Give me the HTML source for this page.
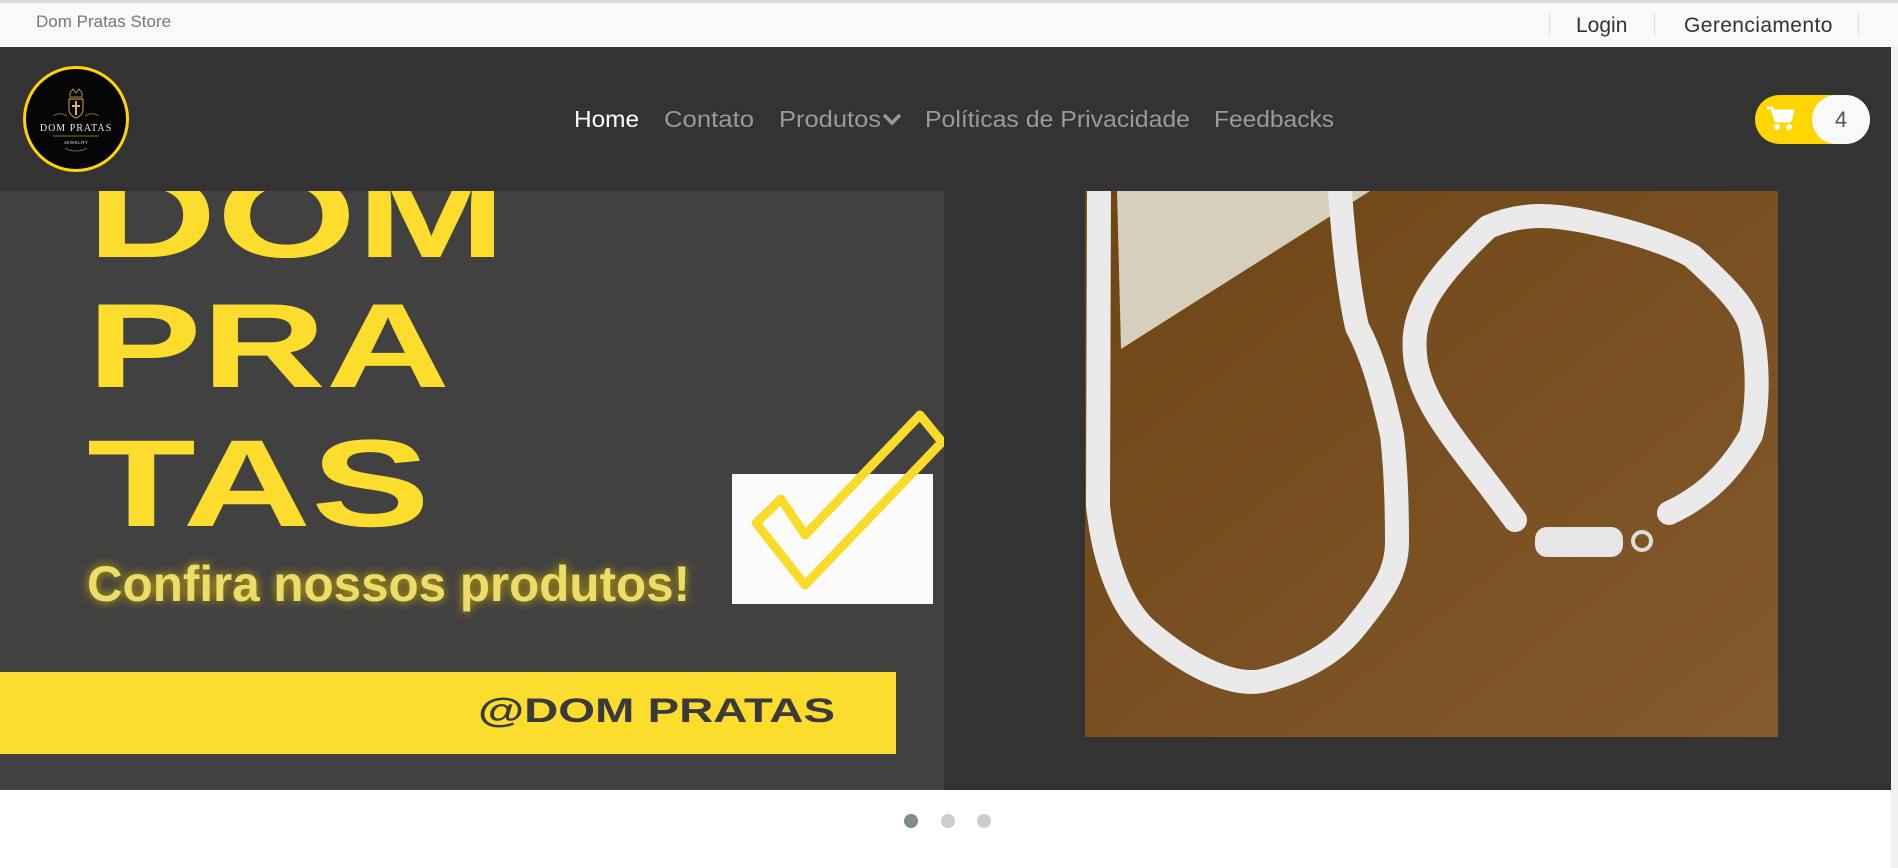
<!DOCTYPE html>
<html><head><meta charset="utf-8">
<style>
*{margin:0;padding:0;box-sizing:border-box}
body{width:1898px;height:868px;overflow:hidden;background:#fff;font-family:"Liberation Sans",sans-serif;position:relative}
.abs{position:absolute}
#top{left:0;top:0;width:1898px;height:47px;background:#f8f9fa;border-top:3px solid #dcdcdc}
#nav{left:0;top:47px;width:1891px;height:144px;background:#333}
.sep{position:absolute;top:12px;width:1px;height:25px;background:#ddd}
.tl{position:absolute;top:14px;font-size:21px;color:#333}
.dot{position:absolute;top:814px;width:14px;height:14px;border-radius:50%;background:#ccc}
</style></head><body>
<div id="top" class="abs"></div>
<div class="abs" style="left:36px;top:12px;font-size:17px;color:#777">Dom Pratas Store</div>
<div class="sep" style="left:1549px"></div>
<div class="tl" style="left:1576px">Login</div>
<div class="sep" style="left:1654px"></div>
<div class="tl" style="left:1684px;letter-spacing:0.4px">Gerenciamento</div>
<div class="sep" style="left:1858px"></div>

<div id="nav" class="abs"></div>
<div class="abs" style="left:23px;top:66px;width:106px;height:106px;border-radius:50%;border:3px solid #ffd400;background:#050505"></div>
<svg class="abs" style="left:23px;top:66px" width="106" height="106" viewBox="0 0 106 106">
<path d="M47 27l3-4 3 4 3-4 3 4v4h-12z" fill="none" stroke="#b08a45" stroke-width="1"/>
<path d="M46 33h14v10c0 5-4 8-7 9-3-1-7-4-7-9z" fill="none" stroke="#b08a45" stroke-width="1.2"/>
<path d="M53 35v14M49 40h8" stroke="#d9b36a" stroke-width="2"/>
<path d="M30 50c6-4 10-2 14 0M76 50c-6-4-10-2-14 0" fill="none" stroke="#8a6a35" stroke-width="1"/>
<text x="53" y="65" font-size="10" fill="#e8e8e8" text-anchor="middle" font-family="Liberation Serif,serif" letter-spacing="1">DOM PRATAS</text>
<path d="M30 70h46" stroke="#8a6a35" stroke-width="1"/>
<text x="53" y="78" font-size="4.5" fill="#ddd" text-anchor="middle" letter-spacing="0.5">JEWELRY</text>
<path d="M42 82c5 4 17 4 22 0" fill="none" stroke="#8a6a35" stroke-width="1"/>
</svg>

<svg class="abs" style="left:560px;top:95px" width="800" height="50" viewBox="0 0 800 50">
<g font-family="Liberation Sans,sans-serif" font-size="23" fill="#9a9a9a">
<text x="14" y="32" fill="#fff" textLength="65" lengthAdjust="spacingAndGlyphs">Home</text>
<text x="104" y="32" textLength="90" lengthAdjust="spacingAndGlyphs">Contato</text>
<text x="219" y="32" textLength="102" lengthAdjust="spacingAndGlyphs">Produtos</text>
<text x="365" y="32" textLength="265" lengthAdjust="spacingAndGlyphs">Políticas de Privacidade</text>
<text x="654" y="32" textLength="120" lengthAdjust="spacingAndGlyphs">Feedbacks</text>
</g>
<path d="M324 20l8 8 8-8" fill="none" stroke="#9a9a9a" stroke-width="3.5"/>
</svg>

<div class="abs" style="left:1755px;top:95px;width:115px;height:49px;border-radius:25px;background:#ffd600"></div>
<div class="abs" style="left:1812px;top:95px;width:58px;height:49px;border-radius:25px;background:#f8f9fa;text-align:center;line-height:49px;font-size:22px;color:#555">4</div>
<svg class="abs" style="left:1766px;top:105px" width="29" height="26" viewBox="0 0 29 26"><path d="M1 3h5l4 13h14l3-10H8" fill="#fff" stroke="#fff" stroke-width="3" stroke-linejoin="round"/><circle cx="11" cy="22" r="3" fill="#fff"/><circle cx="23" cy="22" r="3" fill="#fff"/></svg>

<svg class="abs" style="left:0;top:191px" width="944" height="599" viewBox="0 0 944 599">
<rect width="944" height="599" fill="#414141"/>
<g font-family="Liberation Sans,sans-serif" font-weight="bold" fill="#fcdc2c">
<text x="87" y="66" font-size="120" textLength="419" lengthAdjust="spacingAndGlyphs">DOM</text>
<text x="87" y="196" font-size="120" textLength="363" lengthAdjust="spacingAndGlyphs">PRA</text>
<text x="87" y="335" font-size="124" textLength="343" lengthAdjust="spacingAndGlyphs">TAS</text>
</g>
<text x="87" y="410" font-size="50" font-weight="bold" fill="#ecdc6a" textLength="603" lengthAdjust="spacingAndGlyphs" style="filter:drop-shadow(0 0 5px #c9a800)">Confira nossos produtos!</text>
<rect x="732" y="283" width="201" height="130" fill="#fbfbfb"/>
<polygon points="756,332 781,308 805,344 920,224 942,251 805,394" fill="none" stroke="#f9dc2a" stroke-width="9" stroke-linejoin="round"/>
<rect x="0" y="481" width="896" height="82" fill="#fcdc2c"/>
<text x="478" y="531" font-size="34" font-weight="bold" fill="#3a3a3a" textLength="357" lengthAdjust="spacingAndGlyphs">@DOM PRATAS</text>
</svg>

<div class="abs" style="left:944px;top:191px;width:947px;height:599px;background:#333"></div>
<svg class="abs" style="left:1085px;top:191px" width="693" height="546" viewBox="0 0 693 546">
<defs><linearGradient id="g" x1="0" y1="0" x2="1" y2="1"><stop offset="0" stop-color="#6e4515"/><stop offset="1" stop-color="#835a2c"/></linearGradient></defs>
<rect width="693" height="546" fill="url(#g)"/>
<polygon points="32,0 285,0 36,158" fill="#d6cfbb"/>
<g fill="none" stroke="#eaeaea" stroke-width="24" stroke-linecap="round" stroke-linejoin="round">
<path d="M14,-10 L13,315 C20,380 40,420 63,440 C110,480 150,495 177,490 C220,480 250,460 267,440 C300,400 312,380 312,351 C312,300 310,270 307,244 C295,190 285,160 272,136 C262,90 258,40 254,-10"/>
<path d="M430,329 C380,260 340,220 331,172 C325,130 335,100 403,36 C440,20 470,25 494,29 C550,40 590,55 607,65 C640,95 660,115 666,137 C675,180 672,220 666,244 C640,290 610,310 584,322"/>
</g>
<rect x="450" y="336" width="88" height="30" rx="12" fill="#e6e6e6"/>
<circle cx="557" cy="350" r="9" fill="none" stroke="#ddd" stroke-width="4"/>
</svg>
<div class="abs" style="left:1891px;top:47px;width:7px;height:821px;background:#f1f1f1"></div>

<div class="dot" style="left:904px;background:#7f8c8a"></div>
<div class="dot" style="left:941px"></div>
<div class="dot" style="left:977px"></div>
</body></html>
